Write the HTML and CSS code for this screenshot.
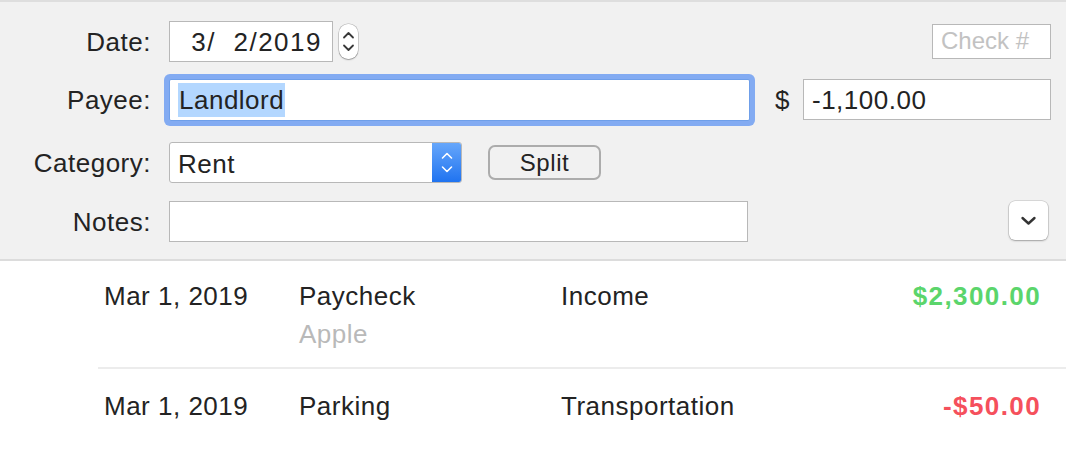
FILE: index.html
```html
<!DOCTYPE html>
<html>
<head>
<meta charset="utf-8">
<link rel="stylesheet" href="styles.css">
</head>
<body>
<div class="panel">
  <div class="row row-date">
    <label class="label">Date:</label>
    <div class="field date-field">3/  2/2019</div>
    <div class="stepper">
      <svg width="19" height="35" viewBox="0 0 19 35">
        <path d="M5 13.5 L9.5 9 L14 13.5" fill="none" stroke="#383838" stroke-width="1.8" stroke-linecap="round" stroke-linejoin="round"/>
        <path d="M5 21.5 L9.5 26 L14 21.5" fill="none" stroke="#383838" stroke-width="1.8" stroke-linecap="round" stroke-linejoin="round"/>
      </svg>
    </div>
    <div class="field check-field"><span class="placeholder">Check #</span></div>
  </div>
  <div class="row row-payee">
    <label class="label">Payee:</label>
    <div class="field payee-field"><span class="selected">Landlord</span></div>
    <span class="dollar">$</span>
    <div class="field amount-field">-1,100.00</div>
  </div>
  <div class="row row-category">
    <label class="label">Category:</label>
    <div class="field popup">
      <span class="popup-text">Rent</span>
      <span class="popup-arrows">
        <svg width="30" height="41" viewBox="0 0 30 41">
          <path d="M10.5 16 L15 11.5 L19.5 16" fill="none" stroke="#fff" stroke-width="1.6" stroke-linecap="round" stroke-linejoin="round"/>
          <path d="M10.5 25 L15 29.5 L19.5 25" fill="none" stroke="#fff" stroke-width="1.6" stroke-linecap="round" stroke-linejoin="round"/>
        </svg>
      </span>
    </div>
    <button class="split-btn">Split</button>
  </div>
  <div class="row row-notes">
    <label class="label">Notes:</label>
    <div class="field notes-field"></div>
    <div class="disclosure">
      <svg width="39" height="39" viewBox="0 0 39 39">
        <path d="M13.5 17 L19.5 22.5 L25.5 17" fill="none" stroke="#333" stroke-width="2.4" stroke-linecap="round" stroke-linejoin="round"/>
      </svg>
    </div>
  </div>
</div>
<div class="list">
  <div class="txn txn-first">
    <div class="c-date">Mar 1, 2019</div>
    <div class="c-payee"><span>Paycheck</span><span class="memo">Apple</span></div>
    <div class="c-cat">Income</div>
    <div class="c-amt pos">$2,300.00</div>
  </div>
  <div class="txn txn-sep">
    <div class="c-date">Mar 1, 2019</div>
    <div class="c-payee"><span>Parking</span></div>
    <div class="c-cat">Transportation</div>
    <div class="c-amt neg">-$50.00</div>
  </div>
</div>
</body>
</html>
```
FILE: styles.css
```css
* { box-sizing: border-box; }
html, body {
  margin: 0;
  padding: 0;
  background: #ffffff;
  font-family: "Liberation Sans", Arial, sans-serif;
  font-size: 26px;
  letter-spacing: 0.5px;
  color: #232323;
  width: 1066px;
  height: 450px;
  overflow: hidden;
}
.panel {
  background: #f1f1f1;
  border-top: 2px solid #dedede;
  border-bottom: 2px solid #dcdcdc;
  padding: 19px 15px 17px 0;
  height: 261px;
}
.row {
  display: flex;
  align-items: center;
}
.row-date { height: 41px; }
.row-payee { height: 42px; margin-top: 17px; }
.row-category { height: 41px; margin-top: 21px; }
.row-notes { height: 41px; margin-top: 18px; }
.label {
  width: 151px;
  margin-right: 18px;
  text-align: right;
  flex: none;
  line-height: 30px;
}
.field {
  background: #ffffff;
  border: 1px solid #b8b8b8;
  height: 100%;
  display: flex;
  align-items: center;
  padding-left: 8px;
  flex: none;
  line-height: 30px;
}
.date-field {
  width: 164px;
  justify-content: flex-end;
  padding-right: 10px;
  white-space: pre;
  letter-spacing: 1.5px;
}
.stepper {
  width: 19px;
  height: 35px;
  margin-left: 6px;
  background: #fff;
  border-radius: 9px;
  box-shadow: 0 0 0 0.5px rgba(0,0,0,0.25), 0 1px 1.5px rgba(0,0,0,0.25);
  display: flex;
}
.check-field {
  margin-left: auto;
  width: 119px;
  height: 35px;
  margin-top: -1px;
}
.placeholder { color: #c2c2c2; font-size: 24px; letter-spacing: 0; }
.payee-field {
  width: 581px;
  border: 1px solid #6f9fe9;
  border-radius: 2px;
  box-shadow: 0 0 0 5px #83abf2;
}
.selected {
  background: #b3d7ff;
  padding: 2px 1px;
  line-height: 30px;
}
.dollar {
  margin-left: 25px;
  line-height: 30px;
}
.amount-field {
  margin-left: auto;
  width: 248px;
  height: 41px;
  margin-top: -1px;
}
.popup {
  width: 293px;
  padding-left: 0;
  border-radius: 3px;
  overflow: hidden;
  justify-content: space-between;
}
.popup-text { padding-left: 8px; margin-top: 2px; }
.popup-arrows {
  width: 30px;
  height: 41px;
  margin: -1px -1px -1px 0;
  background: linear-gradient(#68a8fb, #1e72f0);
  border-radius: 0 4px 4px 0;
  display: flex;
}
.split-btn {
  margin-left: 26px;
  width: 113px;
  height: 35px;
  background: #f1f1f1;
  border: 2px solid #acacac;
  border-radius: 7px;
  font-family: inherit;
  font-size: 24px;
  letter-spacing: 0.6px;
  color: #232323;
  padding: 0;
  line-height: 30px;
}
.notes-field { width: 579px; }
.disclosure {
  margin-left: auto;
  margin-right: 3px;
  width: 39px;
  height: 39px;
  margin-top: -2px;
  background: #fff;
  border-radius: 6px;
  box-shadow: 0 0 0 0.5px rgba(0,0,0,0.2), 0 1px 2px rgba(0,0,0,0.25);
  display: flex;
}
.list { background: #fff; }
.txn {
  display: grid;
  grid-template-columns: 195px 262px 1fr auto;
  padding: 20px 25px 18px 104px;
  line-height: 30px;
}
.c-payee {
  display: flex;
  flex-direction: column;
  gap: 8px;
}
.memo { color: #b9b9b9; }
.c-amt {
  font-weight: bold;
  letter-spacing: 1.4px;
  text-align: right;
}
.pos { color: #5bd56b; }
.neg { color: #f5505c; }
.txn-sep {
  margin-left: 98px;
  padding-left: 6px;
  padding-top: 22px;
  border-top: 2px solid #ececec;
}
```
